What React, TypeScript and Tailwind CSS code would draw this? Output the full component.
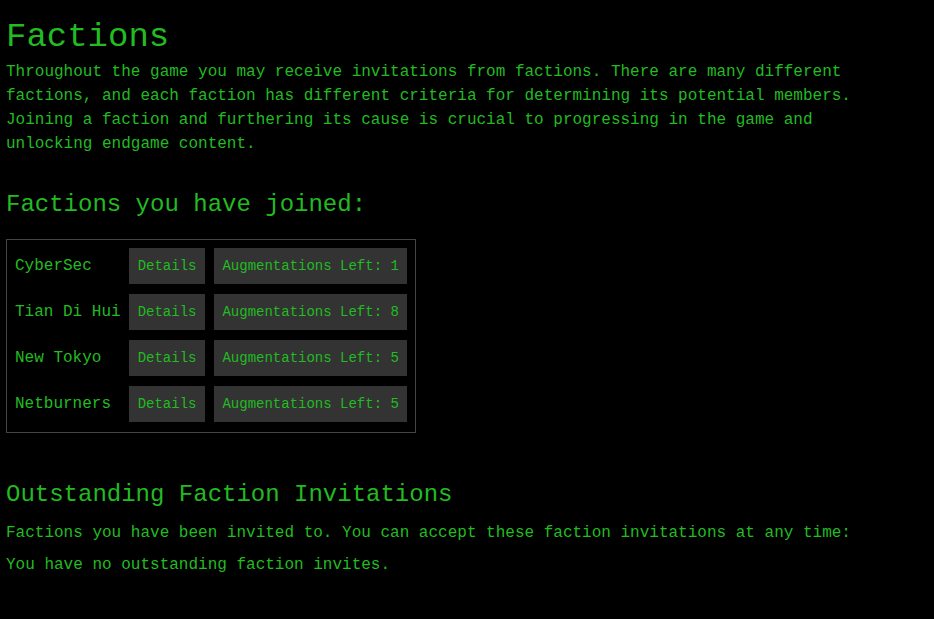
const factions = [
  { name: "CyberSec", augs: 1 },
  { name: "Tian Di Hui", augs: 8 },
  { name: "New Tokyo", augs: 5 },
  { name: "Netburners", augs: 5 },
];

export default function App() {
  return (
    <div className="min-h-[619px] bg-black px-[6px] text-[#22bb22] [font-family:'Lucida_Console','Liberation_Mono',monospace]">
      <h1 className="pt-[17px] text-[34px] leading-[40px]">Factions</h1>
      <p className="mt-[3px] max-w-[880px] text-[16px] leading-[24px]">
        Throughout the game you may receive invitations from factions. There are many different
        factions, and each faction has different criteria for determining its potential members.
        Joining a faction and furthering its cause is crucial to progressing in the game and
        unlocking endgame content.
      </p>

      <h2 className="mt-[33px] text-[24px] leading-[32px]">Factions you have joined:</h2>

      <div className="mt-[18px] inline-grid grid-cols-[auto_auto_auto] items-center gap-x-2 gap-y-[10px] border border-[#444] pb-[10px] pl-2 pr-2 pt-2">
        {factions.map((f) => (
          <div key={f.name} className="contents">
            <span className="text-[16px] leading-[24px]">{f.name}</span>
            <button className="h-[36px] bg-[#333] px-[9px] text-[14px] text-[#22bb22]">
              Details
            </button>
            <button className="ml-[1px] h-[36px] bg-[#333] px-[8px] text-[14px] text-[#22bb22]">
              Augmentations Left: {f.augs}
            </button>
          </div>
        ))}
      </div>

      <h2 className="mt-[46px] text-[24px] leading-[32px]">Outstanding Faction Invitations</h2>
      <p className="mt-[10px] text-[16px] leading-[24px]">
        Factions you have been invited to. You can accept these faction invitations at any time:
      </p>
      <p className="mt-[8px] text-[16px] leading-[24px]">You have no outstanding faction invites.</p>
    </div>
  );
}
